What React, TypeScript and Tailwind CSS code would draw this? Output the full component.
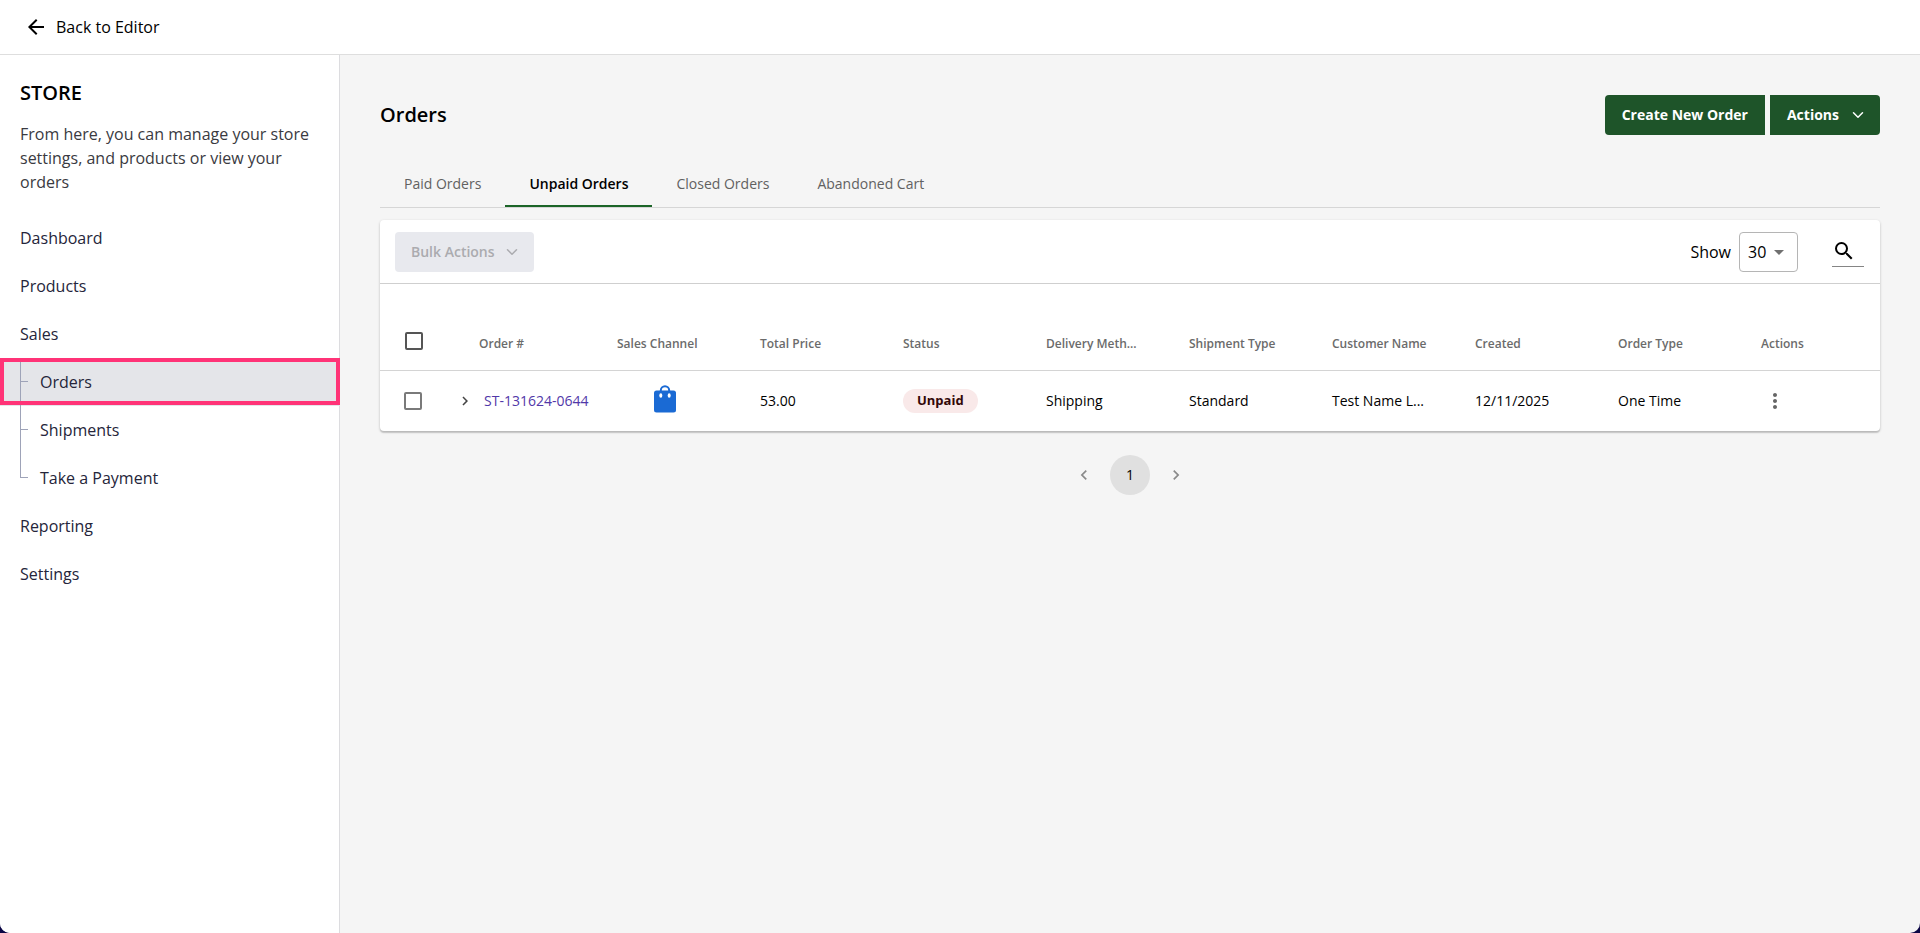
import { clsx } from 'clsx';
import { ChevronDown } from 'lucide-react';
import {
  MdArrowBack,
  MdArrowDropDown,
  MdChevronLeft,
  MdChevronRight,
  MdMoreVert,
  MdSearch,
} from 'react-icons/md';

type NavItem = {
  label: string;
  children?: string[];
};

const navItems: NavItem[] = [
  { label: 'Dashboard' },
  { label: 'Products' },
  { label: 'Sales', children: ['Orders', 'Shipments', 'Take a Payment'] },
  { label: 'Reporting' },
  { label: 'Settings' },
];

const tabs = ['Paid Orders', 'Unpaid Orders', 'Closed Orders', 'Abandoned Cart'];

const columns = [
  'Sales Channel',
  'Total Price',
  'Status',
  'Delivery Meth...',
  'Shipment Type',
  'Customer Name',
  'Created',
  'Order Type',
];

const orders = [
  {
    id: 'ST-131624-0644',
    total: '53.00',
    status: 'Unpaid',
    delivery: 'Shipping',
    shipment: 'Standard',
    customer: 'Test Name L...',
    created: '12/11/2025',
    type: 'One Time',
  },
];

export default function App() {
  return (
    <div className="min-h-screen bg-[#0b0645] font-['Open_Sans',sans-serif] text-black">
      <div className="flex min-h-screen flex-col overflow-hidden rounded-b-[10px] bg-[#f5f5f5]">
        <header className="flex h-[55px] items-center border-b border-[#dedede] bg-white px-6">
          <a href="#editor" className="flex items-center gap-2 text-base">
            <MdArrowBack className="h-6 w-6" />
            Back to Editor
          </a>
        </header>

        <div className="flex flex-1">
          <Sidebar />
          <main className="min-w-0 flex-1 px-10 pt-10">
            <PageHeader />
            <OrderTabs />
            <section className="mt-3 rounded bg-white shadow-[0_1px_3px_rgba(0,0,0,0.2),0_2px_1px_rgba(0,0,0,0.12)]">
              <Toolbar />
              <OrdersTable />
            </section>
            <Pagination />
          </main>
        </div>
      </div>
    </div>
  );
}

function Sidebar() {
  return (
    <aside className="w-[340px] shrink-0 border-r border-[#dcdcdf] bg-white pt-6">
      <div className="px-5">
        <h2 className="text-xl leading-7 font-semibold">STORE</h2>
        <p className="mt-[15px] text-base leading-6 text-[#3a3a41]">
          From here, you can manage your store settings, and products or view your orders
        </p>
      </div>

      <nav className="mt-5 text-base text-[#25253a]">
        <ul>
          {navItems.map((item) => (
            <li key={item.label}>
              <a href={`#${item.label.toLowerCase()}`} className="flex h-12 items-center px-5">
                {item.label}
              </a>
              {item.children ? <SubNav items={item.children} active="Orders" /> : null}
            </li>
          ))}
        </ul>
      </nav>
    </aside>
  );
}

function SubNav({ items, active }: { items: string[]; active: string }) {
  return (
    <ul>
      {items.map((label, index) => {
        const isLast = index === items.length - 1;

        return (
          <li key={label}>
            <a
              href={`#${label.toLowerCase().replaceAll(' ', '-')}`}
              className={clsx(
                'relative flex h-12 items-center pl-10',
                label === active && '-mr-px bg-[#e4e5e9]',
              )}
            >
              {/* tree connector */}
              <span
                className={clsx(
                  'absolute top-0 left-5 w-px bg-[#9ea3b8]',
                  isLast ? 'h-6' : 'h-12',
                )}
              />
              <span className="absolute top-[23px] left-5 h-px w-2 bg-[#9ea3b8]" />
              {label === active ? (
                <span className="absolute inset-x-0 top-0 bottom-px border-4 border-[#ff3377]" />
              ) : null}
              {label}
            </a>
          </li>
        );
      })}
    </ul>
  );
}

function PageHeader() {
  return (
    <div className="flex h-10 items-center justify-between">
      <h1 className="text-xl font-semibold">Orders</h1>
      <div className="flex gap-[5px] text-sm font-bold text-white">
        <button type="button" className="h-10 rounded-l bg-[#1e5429] px-[17px]">
          Create New Order
        </button>
        <button
          type="button"
          className="flex h-10 items-center gap-2.5 rounded-r bg-[#1e5429] pr-[13px] pl-[17px]"
        >
          Actions
          <ChevronDown className="h-[18px] w-[18px]" />
        </button>
      </div>
    </div>
  );
}

function OrderTabs() {
  return (
    <div role="tablist" className="mt-6 flex h-[49px] border-b border-[#d6d6d6]">
      {tabs.map((tab) => {
        const selected = tab === 'Unpaid Orders';

        return (
          <button
            key={tab}
            type="button"
            role="tab"
            aria-selected={selected}
            className={clsx(
              'border-b-2 px-6 pt-[3px] text-sm',
              selected
                ? 'border-[#1b6427] font-semibold text-black'
                : 'border-transparent text-[#616161]',
            )}
          >
            {tab}
          </button>
        );
      })}
    </div>
  );
}

function Toolbar() {
  return (
    <div className="flex h-16 items-center border-b border-[#cfcfcf] pr-4 pl-[15px]">
      <button
        type="button"
        disabled
        className="flex h-10 items-center gap-2 rounded bg-[#e8e9ee] pr-[13px] pl-4 text-sm font-semibold text-[#ababaf]"
      >
        Bulk Actions
        <ChevronDown className="h-[18px] w-[18px]" />
      </button>

      <label htmlFor="page-size" className="mr-2 ml-auto text-base">
        Show
      </label>
      <div className="relative mr-[34px]">
        <select
          id="page-size"
          defaultValue="30"
          className="h-10 w-[59px] appearance-none rounded border border-[#b5b5b5] bg-white pl-2 text-base"
        >
          <option>30</option>
          <option>50</option>
          <option>100</option>
        </select>
        <MdArrowDropDown className="pointer-events-none absolute top-2 right-[7px] h-6 w-6 text-[#707070]" />
      </div>

      <label className="flex h-[30px] w-8 items-center border-b border-[#858585]">
        <MdSearch className="h-6 w-6 shrink-0" />
        <input type="text" aria-label="Search orders" className="w-full min-w-0 outline-none" />
      </label>
    </div>
  );
}

function OrdersTable() {
  return (
    <table className="w-full table-fixed text-left text-sm">
      <colgroup>
        <col className="w-[76px]" />
        <col className="w-[153px]" />
        {columns.map((column) => (
          <col key={column} />
        ))}
        <col className="w-[127px]" />
      </colgroup>
      <thead>
        <tr className="h-[86px] border-b border-[#d4d4d4] text-xs text-[#6b6b6b]">
          <th className="pt-7 pl-[25px]">
            <Checkbox label="Select all orders" className="border-[#555555]" />
          </th>
          <th className="pt-[34px] pl-[23px] font-semibold">Order #</th>
          {columns.map((column) => (
            <th key={column} className="px-2 pt-[34px] font-semibold whitespace-nowrap">
              {column}
            </th>
          ))}
          <th className="px-2 pt-[34px] font-semibold">Actions</th>
        </tr>
      </thead>
      <tbody>
        {orders.map((order) => (
          <tr key={order.id} className="h-[61px]">
            <td className="pl-6">
              <Checkbox label={`Select order ${order.id}`} className="border-[#7a7a7a]" />
            </td>
            <td>
              <div className="flex items-center gap-2.5">
                <button type="button" aria-label="Expand order">
                  <MdChevronRight className="h-[18px] w-[18px] text-[#444444]" />
                </button>
                <a href={`#${order.id}`} className="text-[#5138a8]">
                  {order.id}
                </a>
              </div>
            </td>
            <td className="pb-1 pl-11">
              <BagIcon />
            </td>
            <td className="px-2">{order.total}</td>
            <td className="px-2">
              <span className="inline-flex h-6 items-center rounded-full bg-[#f9e9e9] px-3.5 text-[13px] font-bold text-[#320808]">
                {order.status}
              </span>
            </td>
            <td className="px-2">{order.delivery}</td>
            <td className="px-2">{order.shipment}</td>
            <td className="px-2 whitespace-nowrap">{order.customer}</td>
            <td className="px-2">{order.created}</td>
            <td className="px-2">{order.type}</td>
            <td className="px-2.5">
              <button type="button" aria-label="Order actions" className="flex text-[#666666]">
                <MdMoreVert className="h-6 w-6" />
              </button>
            </td>
          </tr>
        ))}
      </tbody>
    </table>
  );
}

function Checkbox({ label, className }: { label: string; className: string }) {
  return (
    <input
      type="checkbox"
      aria-label={label}
      className={clsx('block h-[18px] w-[18px] appearance-none rounded-xs border-2', className)}
    />
  );
}

function BagIcon() {
  return (
    <svg viewBox="0 0 24 28" className="h-7 w-6" role="img" aria-label="Online store">
      <path
        d="M7.8 7V5.4a4.2 4.2 0 0 1 8.4 0V7"
        fill="none"
        stroke="#1a6ad4"
        strokeWidth="2"
      />
      <rect x="1" y="5.5" width="22" height="22" rx="2.5" fill="#1a6ad4" />
      <ellipse cx="7.8" cy="10.5" rx="1.5" ry="2.2" fill="#ffffff" />
      <ellipse cx="16.2" cy="10.5" rx="1.5" ry="2.2" fill="#ffffff" />
    </svg>
  );
}

function Pagination() {
  return (
    <nav aria-label="Pagination" className="mt-6 flex items-center justify-center gap-4">
      <button type="button" aria-label="Previous page" className="text-[#8a8a8a]">
        <MdChevronLeft className="h-5 w-5" />
      </button>
      <button
        type="button"
        aria-current="page"
        className="h-10 w-10 rounded-full bg-[#e0e0e0] text-sm"
      >
        1
      </button>
      <button type="button" aria-label="Next page" className="text-[#8a8a8a]">
        <MdChevronRight className="h-5 w-5" />
      </button>
    </nav>
  );
}
